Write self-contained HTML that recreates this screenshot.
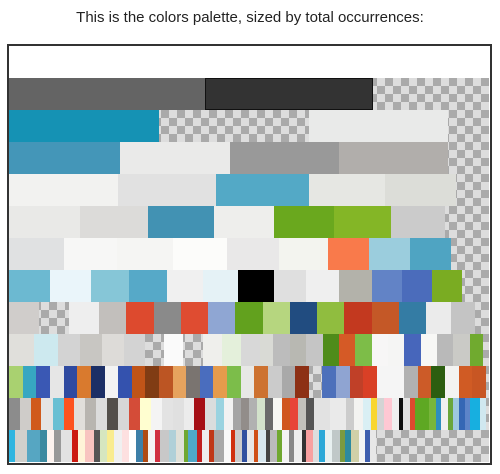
<!DOCTYPE html>
<html><head><meta charset="utf-8"><style>
*{margin:0;padding:0;box-sizing:border-box}
body{width:500px;height:474px;background:#fff;position:relative;overflow:hidden;font-family:"Liberation Sans",sans-serif}
.t{position:absolute;top:9px;left:0;width:500px;text-align:center;font-size:15px;color:#222}
.box{position:absolute;left:7px;top:44px;width:485px;height:421px;border:2px solid #333;background:#fff}
.r{position:absolute;left:9px;width:480px;height:32px;display:flex;
background-image:linear-gradient(45deg,#aaa 25%,transparent 25%,transparent 75%,#aaa 75%),linear-gradient(45deg,#aaa 25%,#ddd 25%,#ddd 75%,#aaa 75%);background-size:16px 16px;background-position:0 0,8px 8px}
.r div{height:32px;flex:none}
.k{background:transparent!important}
.r .s{display:flex;width:367px}
.r .s div{flex:1 0 auto}
</style></head><body>
<div class="t">This is the colors palette, sized by total occurrences:</div>
<div class="box"></div>
<div class="r" style="top:78px"><div style="width:196px;background:#646464"></div><div style="width:168px;background:#333;outline:1px solid #111;outline-offset:-1px"></div></div>
<div class="r" style="top:110px"><div style="width:150px;background:#1592b4"></div><div style="width:150px" class="k"></div><div style="width:139px;background:#e9eae9"></div></div>
<div class="r" style="top:142px"><div style="width:111px;background:#4496b8"></div><div style="width:110px;background:#eaeae9"></div><div style="width:109px;background:#999"></div><div style="width:109px;background:#b1aeab"></div></div>
<div class="r" style="top:174px"><div style="width:109px;background:#f2f2f0"></div><div style="width:98px;background:#e1e1e1"></div><div style="width:93px;background:#53a9c6"></div><div style="width:76px;background:#e6e7e3"></div><div style="width:71px;background:#dcddd8"></div></div>
<div class="r" style="top:206px"><div style="width:71px;background:#e9e9e7"></div><div style="width:68px;background:#dcdbd9"></div><div style="width:66px;background:#4292b3"></div><div style="width:60px;background:#eeeeec"></div><div style="width:60px;background:#6aa81e"></div><div style="width:57px;background:#84b626"></div><div style="width:54px;background:#cbcbcb"></div></div>
<div class="r" style="top:238px"><div style="width:55px;background:#e0e1e2"></div><div style="width:53px;background:#f7f7f6"></div><div style="width:56px;background:#f5f5f3"></div><div style="width:54px;background:#fcfcfa"></div><div style="width:52px;background:#e9e8e8"></div><div style="width:49px;background:#f3f4ef"></div><div style="width:41px;background:#f97a4b"></div><div style="width:41px;background:#9bcddd"></div><div style="width:41px;background:#4fa4c2"></div></div>
<div class="r" style="top:270px"><div style="width:41px;background:#6cb9d1"></div><div style="width:41px;background:#eaf5fa"></div><div style="width:38px;background:#86c6d7"></div><div style="width:38px;background:#56a9c8"></div><div style="width:36px;background:#f0f0f0"></div><div style="width:35px;background:#e5f2f6"></div><div style="width:36px;background:#000"></div><div style="width:32px;background:#dfdfdf"></div><div style="width:33px;background:#efefef"></div><div style="width:33px;background:#b3b2aa"></div><div style="width:30px;background:#6283c6"></div><div style="width:30px;background:#4b6cbb"></div><div style="width:30px;background:#7aac22"></div></div>
<div class="r" style="top:302px"><div style="width:30px;background:#d0cdcb"></div><div style="width:30px" class="k"></div><div style="width:30px;background:#eee"></div><div style="width:27px;background:#c2bfbc"></div><div style="width:28px;background:#dd4a2e"></div><div style="width:27px;background:#8a8a8a"></div><div style="width:27px;background:#df4c31"></div><div style="width:27px;background:#8fa6d3"></div><div style="width:28px;background:#62a11e"></div><div style="width:27px;background:#b6d67f"></div><div style="width:27px;background:#214c80"></div><div style="width:27px;background:#90bd3f"></div><div style="width:28px;background:#c3391f"></div><div style="width:27px;background:#c45827"></div><div style="width:27px;background:#347ca4"></div><div style="width:25px;background:#ebebeb"></div><div style="width:24px;background:#c4c4c4"></div></div>
<div class="r" style="top:334px"><div style="width:25px;background:#e0dfdb"></div><div style="width:24px;background:#cde9ef"></div><div style="width:22px;background:#d3d3d3"></div><div style="width:22px;background:#c8c6c2"></div><div style="width:22px;background:#dddbd8"></div><div style="width:21px;background:#d3d3d3"></div><div style="width:19px" class="k"></div><div style="width:19px;background:#fafafa"></div><div style="width:20px" class="k"></div><div style="width:19px;background:#efefec"></div><div style="width:19px;background:#e4f0db"></div><div style="width:19px;background:#d8d8d8"></div><div style="width:13px;background:#d9dad5"></div><div style="width:17px;background:#bcbcbc"></div><div style="width:16px;background:#b8b8b2"></div><div style="width:17px;background:#c5c5c5"></div><div style="width:16px;background:#4f8c1a"></div><div style="width:16px;background:#d55a26"></div><div style="width:17px;background:#7dbd48"></div><div style="width:16px;background:#f7f6f6"></div><div style="width:16px;background:#f5f5f4"></div><div style="width:17px;background:#4766bb"></div><div style="width:16px;background:#f7f7f5"></div><div style="width:16px;background:#b9b9b9"></div><div style="width:17px;background:#cacac6"></div><div style="width:13px;background:#70aa2f"></div></div>
<div class="r" style="top:366px"><div style="width:14px;background:#a9d170"></div><div style="width:13px;background:#37a7c1"></div><div style="width:14px;background:#3a58b4"></div><div style="width:14px;background:#e6e6e6"></div><div style="width:13px;background:#2f4aa0"></div><div style="width:14px;background:#d97a2e"></div><div style="width:14px;background:#1c2f66"></div><div style="width:13px;background:#f3f3f3"></div><div style="width:14px;background:#3452ae"></div><div style="width:13px;background:#c05418"></div><div style="width:14px;background:#803c14"></div><div style="width:14px;background:#bc5523"></div><div style="width:13px;background:#e6a35e"></div><div style="width:14px;background:#7a7470"></div><div style="width:13px;background:#4a6dbe"></div><div style="width:14px;background:#e59b4c"></div><div style="width:14px;background:#7cbd4a"></div><div style="width:13px;background:#e8e8e6"></div><div style="width:14px;background:#cd7230"></div><div style="width:14px;background:#cbcbcb"></div><div style="width:13px;background:#a9a9a9"></div><div style="width:14px;background:#8d3015"></div><div style="width:13px" class="k"></div><div style="width:14px;background:#4d70bb"></div><div style="width:14px;background:#8fa4d2"></div><div style="width:13px;background:#c04028"></div><div style="width:14px;background:#d94026"></div><div style="width:27px;background:#f5f5f5"></div><div style="width:14px;background:#b1b1b1"></div><div style="width:13px;background:#cc5b28"></div><div style="width:14px;background:#2c5e10"></div><div style="width:14px;background:#f3f3f1"></div><div style="width:13px;background:#d05b24"></div><div style="width:14px;background:#c85623"></div></div>
<div class="r" style="top:398px"><div style="width:11px;background:#8c8c8c"></div><div style="width:11px;background:#cfccc9"></div><div style="width:10px;background:#d05a1c"></div><div style="width:12px;background:#e4e4e4"></div><div style="width:11px;background:#68bfd3"></div><div style="width:10px;background:#fd531f"></div><div style="width:11px;background:#e1dfdb"></div><div style="width:11px;background:#b8b5b0"></div><div style="width:11px;background:#dcdcdc"></div><div style="width:11px;background:#534f4b"></div><div style="width:11px;background:#d7d7d7"></div><div style="width:11px;background:#d44c38"></div><div style="width:11px;background:#fffed0"></div><div style="width:11px;background:#f4f4f4"></div><div style="width:11px;background:#e3e3e3"></div><div style="width:11px;background:#e0e0e0"></div><div style="width:10px;background:#ececec"></div><div style="width:11px;background:#a50f16"></div><div style="width:11px;background:#dadddd"></div><div style="width:8px;background:#9ad3e0"></div><div style="width:9px;background:#f2f2f2"></div><div style="width:8px;background:#a5a5a5"></div><div style="width:8px;background:#928d8a"></div><div style="width:8px;background:#b1b1b1"></div><div style="width:8px;background:#d3e2cb"></div><div style="width:8px;background:#6a6a6a"></div><div style="width:9px;background:#f7f7f3"></div><div style="width:8px;background:#d0561e"></div><div style="width:8px;background:#e84539"></div><div style="width:8px;background:#c2c1bc"></div><div style="width:8px;background:#555"></div><div style="width:16px;background:#e2e2e2"></div><div style="width:16px;background:#eaeaea"></div><div style="width:8px;background:#ccc"></div><div style="width:9px;background:#f3f3f1"></div><div style="width:8px;background:#d9eff4"></div><div style="width:6px;background:#f9d631"></div><div style="width:7px;background:#d4d4d4"></div><div style="width:8px;background:#ffc8d3"></div><div style="width:7px;background:#f0f0f0"></div><div style="width:4px;background:#111"></div><div style="width:7px;background:#e4e4e4"></div><div style="width:5px;background:#dd4a2e"></div><div style="width:14px;background:#5ea823"></div><div style="width:7px;background:#78b63b"></div><div style="width:5px;background:#2e8ebf"></div><div style="width:7px;background:#f0f0f0"></div><div style="width:5px;background:#6aa63a"></div><div style="width:6px;background:#9ec8de"></div><div style="width:6px;background:#3467b5"></div><div style="width:5px;background:#5c84c9"></div><div style="width:10px;background:#17afe0"></div><div style="width:6px;background:#d0e8f0"></div></div>
<div class="r" style="top:430px"><div class="s"><div style="width:5px;background:#2fb5e0"></div><div style="width:10px;background:#d0d0cc"></div><div style="width:12px;background:#56a6c2"></div><div style="width:6px;background:#3d8aa0"></div><div style="width:5px;background:#fdf3ef"></div><div style="width:6px;background:#999"></div><div style="width:10px;background:#e2e2e2"></div><div style="width:4px;background:#cc1a10"></div><div style="width:6px;background:#fff4d8"></div><div style="width:8px;background:#f8c4c0"></div><div style="width:4px;background:#555"></div><div style="width:6px;background:#d6e6c0"></div><div style="width:6px;background:#f9ec90"></div><div style="width:6px;background:#f0f0f0"></div><div style="width:6px;background:#fde0e0"></div><div style="width:6px;background:#fff"></div><div style="width:5px;background:#3d7fa8"></div><div style="width:4px;background:#b04a14"></div><div style="width:6px;background:#f4f4f4"></div><div style="width:3px;background:#d03040"></div><div style="width:8px;background:#c8c8c8"></div><div style="width:6px;background:#b0d0d8"></div><div style="width:6px;background:#e0e0d8"></div><div style="width:3px;background:#70a830"></div><div style="width:8px;background:#50a8c8"></div><div style="width:3px;background:#c02020"></div><div style="width:6px;background:#eee"></div><div style="width:4px;background:#c03818"></div><div style="width:8px;background:#a8a8a8"></div><div style="width:6px;background:#f8f8f8"></div><div style="width:3px;background:#d03010"></div><div style="width:5px;background:#ccc"></div><div style="width:4px;background:#3050a0"></div><div style="width:6px;background:#e8e8e8"></div><div style="width:3px;background:#d05018"></div><div style="width:6px;background:#d8e8f0"></div><div style="width:3px;background:#444"></div><div style="width:6px;background:#bbb"></div><div style="width:3px;background:#70a830"></div><div style="width:6px;background:#f4f4f4"></div><div style="width:4px;background:#888"></div><div style="width:6px;background:#eee"></div><div style="width:3px;background:#333"></div><div style="width:6px;background:#f8a0a0"></div><div style="width:4px;background:#ddd"></div><div style="width:5px;background:#2aa8d8"></div><div style="width:6px;background:#e8f0f0"></div><div style="width:6px;background:#c0c8c8"></div><div style="width:4px;background:#7a9a40"></div><div style="width:5px;background:#2c8aa0"></div><div style="width:6px;background:#d0d0a8"></div><div style="width:5px;background:#f4f4f4"></div><div style="width:4px;background:#3f5fae"></div><div style="width:4px;background:#e8e8e8"></div></div></div>
</body></html>
